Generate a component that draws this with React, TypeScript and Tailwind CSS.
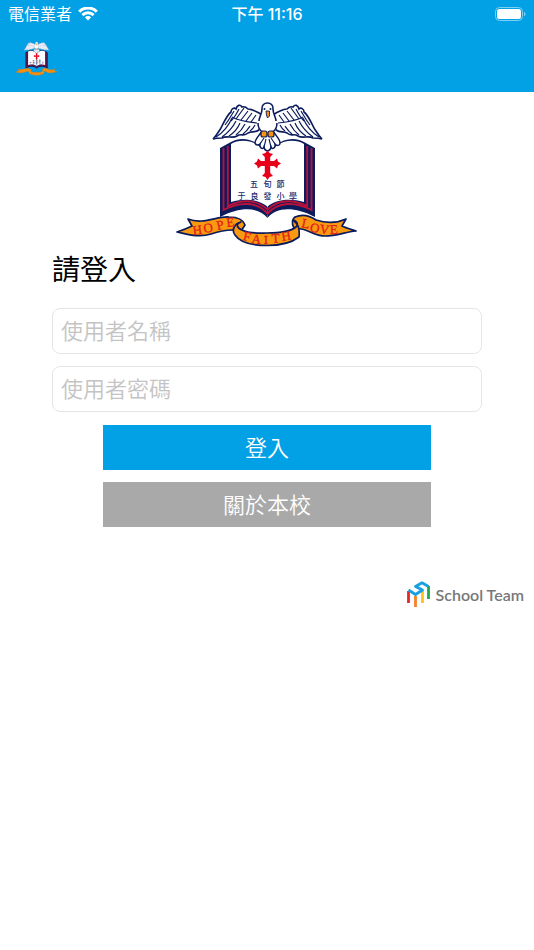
import React from "react";

const CJK = "font-['Inter','Noto_Sans_CJK_TC',sans-serif]";

function EmblemHalf({ line }: { line: string }) {
  return (
    <g>
      <path d="M45 48 L56 42 C64 37 76 38 84 45 L92.5 50 V118 C84 107 66 106 45 117 Z" fill="#0b1b5c" />
      <path d="M56 44 C64 39 76 40 84 46 L93 50 V107 C84 99 70 98 56 102 Z" fill="#fff" />
      <path d="M48.5 48 V110 C66 101 82 102 92.5 113.5 M52.8 46 V106 C68 99 82 100 92.5 109.5" fill="none" stroke="#b8123a" strokeWidth="1.9" />
      <path
        d="M38 39 C42 35 44 31 46 28 C49 22 52 15 56 12 C56 9 59 7 61 9 C62 5 65 4 67 7 C70 6 72 8 73 9 C77 9 80 11 84 13 L87 15 L84 30 C80 33 76 31 73 33 C69 37 66 33 62 36 C57 39 52 35 47 38 C44 38 41 38 38 39 Z"
        fill="#fff"
        stroke={line}
        strokeWidth="1.6"
      />
      <path
        d="M41 37 C49 32 54 25 57 18 M47 37 C54 32 58 27 61 21 M54 36 C60 32 63 28 65 23 M61 35 C66 31 68 28 70 24 M68 34 C72 31 73 29 75 26 M75 31 C78 29 79 27 80 25 M50 25 C54 20 56 16 59 11 M56 21 C60 17 62 13 64 9 M61 19 L69 8 M66 20 L73 11 M71 21 L77 13 M76 22 L81 15 M57 17 C64 21 72 22 82 23"
        fill="none"
        stroke={line}
        strokeWidth="1.2"
      />
    </g>
  );
}

function Emblem({ className, soft = false }: { className: string; soft?: boolean }) {
  const line = soft ? "#8b9cc6" : "#0b1b5c";
  const ribbon = {
    fill: "#f9990f",
    stroke: soft ? "#c97a2a" : "#0b1b5c",
    strokeWidth: 1.7,
    strokeLinejoin: "round" as const,
  };
  return (
    <svg viewBox="0 0 184 148" className={className} role="img" aria-label="五旬節于良發小學">
      <EmblemHalf line={line} />
      <g transform="matrix(-1 0 0 1 185 0)">
        <EmblemHalf line={line} />
      </g>
      <path d="M87 31 C84 36 80 39 80 43 C81 46 84 45 85 44 C84 48 88 50 89 47 C90 52 95 52 96 47 C97 50 101 48 100 44 C102 46 105 46 105 43 C105 39 101 36 98 31 Z" fill="#fff" stroke={line} strokeWidth="1.5" />
      <path d="M85 44 L89 38 M89 47 L91 39 M96 47 L94 39 M100 44 L96 38" stroke={line} strokeWidth="1.1" />
      <path d="M87 9 C86 1 99 1 98 9 C98 14 101 17 102 22 C103 28 100 34 92.5 34 C85 34 82 28 83 22 C84 17 87 14 87 9 Z" fill="#fff" />
      <path d="M84 21 C84 17 87 14 87 9 C86 1 99 1 98 9 C98 14 101 17 101 21 M83 23 C83 27 85 31 88 32 M102 23 C102 27 100 31 97 32" fill="none" stroke={line} strokeWidth="1.6" />
      <circle cx="89.5" cy="9" r="1" fill={line} />
      <circle cx="95.5" cy="9" r="1" fill={line} />
      <path d="M91 11 H94.5 L94.5 16 L92.5 18 L91.5 15 Z" fill="#f7930f" stroke={line} strokeWidth="0.9" />
      <rect x="86" y="31" width="6" height="6" rx="2" fill="#f7930f" stroke={line} strokeWidth="1.2" />
      <rect x="93" y="31" width="6" height="6" rx="2" fill="#f7930f" stroke={line} strokeWidth="1.2" />
      <path
        d="M92.5 50 L94.5 53 L98 54 L95.2 57 V61 H99 L102 58.5 L103 61.5 L106 63.5 L103 65.5 L102 68.5 L99 66 H95.2 V73 L98 76 L94.5 77 L92.5 80 L90.5 77 L87 76 L89.8 73 V66 H86 L83 68.5 L82 65.5 L79 63.5 L82 61.5 L83 58.5 L86 61 H89.8 V57 L87 54 L90.5 53 Z"
        fill="#e60019"
      />
      <g fill="#1c2a6b" fontSize="8" fontWeight="500" textAnchor="middle" fontFamily="'Noto Sans CJK TC', sans-serif">
        <text x="79 92.5 105.5" y="87">五旬節</text>
        <text x="66.5 79.5 92.5 105.5 118" y="98.5">于良發小學</text>
      </g>
      <path {...ribbon} d="M13 119 C28 125 42 116 54 117 C62 117 68 119 70 125 L66 131 C54 128 42 132 36 134 C24 138 12 134 2 132 C8 130 13 128 17 126 Z" />
      <path {...ribbon} d="M171 119 C160 124 150 123 141 120 C134 115 127 114 120 117 C116 120 117 124 119 128 L126 129 C134 130 140 136 150 136 C162 136 170 132 181 131 C175 129 171 128 167 126 Z" />
      <path {...ribbon} d="M66 122 C60 124 62 128 67 130 C75 134 84 133 92 133 C103 133 115 132 121 127 C124 124 121 120 118 120 C123 124 125 128 124 137 C115 144 103 145.5 92 145.5 C80 145.5 66 144 60 135 C56 130 60 123 66 122 Z" />
      <g
        fill="#e0201b"
        stroke="#e0201b"
        strokeWidth="0.3"
        fontSize="13"
        textAnchor="middle"
        fontFamily="'Liberation Serif', serif"
        opacity={soft ? 0.3 : 1}
      >
        <text x="23 34 46 56" y="135 133 130 127" rotate="-8 -10 -12 -8">HOPE</text>
        <text x="71 81 91 101 112" y="140 143 144 143 141" rotate="12 6 0 -4 -10">FAITH</text>
        <text x="130 139 149 159" y="127 131 133 134" rotate="12 14 8 -2">LOVE</text>
      </g>
    </svg>
  );
}

function StatusBar() {
  return (
    <div className="grid h-7 grid-cols-3 items-center px-2 text-base leading-6">
      <div className="flex items-center gap-1.5">
        <span>電信業者</span>
        <svg viewBox="0 0 20 14" className="h-3.5 w-5" aria-label="Wi-Fi">
          <g fill="none" stroke="#fff" strokeWidth="3">
            <path d="M1.2 4.7 C6 -0.2 14 -0.2 18.8 4.7" />
            <path d="M4.4 8.1 C7.5 5.1 12.5 5.1 15.600 8.1" />
          </g>
          <path d="M10 13.5 L6.8 10.3 C8.5 8.7 11.5 8.7 13.2 10.3 Z" fill="#fff" />
        </svg>
      </div>
      <div className="text-center font-medium">下午 11:16</div>
      <svg viewBox="0 0 31 15" className="h-[15px] w-[31px] justify-self-end" aria-label="電池">
        <rect x="0.5" y="0.5" width="27" height="13" rx="4" fill="none" stroke="#7fcff2" />
        <rect x="2" y="2" width="24" height="10" rx="2.5" fill="#fff" />
        <path d="M29 5 C31 5.5 31 8.5 29 9 Z" fill="#7fcff2" />
      </svg>
    </div>
  );
}

function SchoolTeam() {
  return (
    <div className="flex items-center justify-end gap-1.5 pr-2.5">
      <svg viewBox="0 0 23 27" className="h-[27px] w-[23px]" fill="none" strokeWidth="2.8" aria-hidden="true">
        <path d="M1.5 10 V22" stroke="#e5262b" />
        <path d="M8.5 15 V26" stroke="#f5812a" />
        <path d="M15.5 10 V22" stroke="#fcc419" />
        <path d="M21.5 5 V18" stroke="#1fa84c" />
        <path d="M1.5 9 L8.5 13.5 L15.5 9 L8.5 5.5 L15 1.8 L21.5 5.5" stroke="#1a9fe0" strokeLinejoin="round" />
      </svg>
      <span className="font-['Lato','Noto_Sans',sans-serif] text-base leading-6 font-semibold text-[#77787b]">School Team</span>
    </div>
  );
}

export default function App() {
  const field =
    "h-[46px] w-full rounded-lg border border-[#e6e6e6] bg-white px-2 text-[22px] font-[350] text-black outline-none placeholder:text-[#c4c4c4]";
  const button = "h-[45px] w-full text-[22px] leading-8 font-[350] text-white";
  return (
    <div className={`min-h-screen bg-white ${CJK}`}>
      <header className="h-[92px] bg-[#02a0e5] text-white">
        <StatusBar />
        <div className="px-[15px] pt-3">
          <Emblem soft className="h-[37px] w-[43px]" />
        </div>
      </header>
      <main>
        <Emblem className="mx-auto mt-2 h-[148px] w-[184px]" />
        <form className="mx-[52px]" onSubmit={(e) => e.preventDefault()}>
          <h1 className="pt-0.5 text-[28px] leading-10 text-black">請登入</h1>
          <div className="mt-[18px] flex flex-col gap-3">
            <input type="text" aria-label="使用者名稱" placeholder="使用者名稱" className={field} />
            <input type="password" aria-label="使用者密碼" placeholder="使用者密碼" className={field} />
          </div>
          <div className="mx-[51px] mt-[13px] flex flex-col gap-3">
            <button type="submit" className={`${button} bg-[#02a0e5]`}>登入</button>
            <button type="button" className={`${button} bg-[#a9a9a9]`}>關於本校</button>
          </div>
        </form>
        <footer className="mt-[54px]">
          <SchoolTeam />
        </footer>
      </main>
    </div>
  );
}
